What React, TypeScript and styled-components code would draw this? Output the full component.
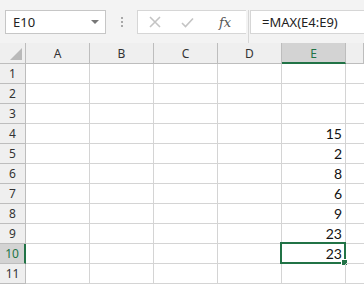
import React from "react";
import styled, { createGlobalStyle } from "styled-components";

const Global = createGlobalStyle`
  html, body { margin: 0; padding: 0; background: #ffffff; }
  body { width: 364px; height: 284px; overflow: hidden; }
`;

const GREEN = "#217346";
const GRID = "#d4d4d4";
const HEAD_LINE = "#bdbdbd";

const Page = styled.div`
  width: 364px;
  height: 284px;
  display: flex;
  flex-direction: column;
  font-family: "Segoe UI", "Noto Sans", "Open Sans", sans-serif;
`;

const Toolbar = styled.div`
  height: 43px;
  background: #f3f3f3;
  display: flex;
  align-items: flex-start;
  padding-top: 10px;
  box-sizing: border-box;
`;

const NameBox = styled.div`
  margin-left: 5px;
  width: 101px;
  height: 24px;
  box-sizing: border-box;
  background: #fff;
  border: 1px solid #c6c6c6;
  display: flex;
  align-items: center;
  justify-content: space-between;
  padding: 0 6px 0 7px;
  font-size: 13px;
  color: #222;
`;

const Caret = styled.span`
  width: 0;
  height: 0;
  border-left: 4px solid transparent;
  border-right: 4px solid transparent;
  border-top: 4px solid #777;
`;

const Dots = styled.div`
  width: 31px;
  height: 24px;
  display: flex;
  flex-direction: column;
  align-items: center;
  justify-content: center;
  gap: 2px;
  span {
    width: 2px;
    height: 2px;
    background: #a8a8a8;
  }
`;

const ActionBox = styled.div`
  width: 109px;
  height: 24px;
  box-sizing: border-box;
  background: #fff;
  border: 1px solid #d6d6d6;
  border-right: none;
  display: flex;
  align-items: center;
  padding-left: 11px;
  gap: 20px;
`;

const Fx = styled.span`
  font-family: "DejaVu Serif", "Liberation Serif", serif;
  font-style: italic;
  font-size: 13px;
  color: #555;
  margin-left: 5px;
`;

const Splitter = styled.div`
  width: 4px;
  height: 33px;
  margin-top: -10px;
  display: flex;
  justify-content: center;
  &::before {
    content: "";
    width: 1px;
    height: 100%;
    background: #d6d6d6;
    margin-top: 10px;
  }
`;

const FormulaBox = styled.div`
  flex: 1;
  height: 24px;
  box-sizing: border-box;
  background: #fff;
  border: 1px solid #d6d6d6;
  border-right: none;
  display: flex;
  align-items: center;
  padding-left: 11px;
  font-size: 13px;
  color: #222;
`;

const Sheet = styled.div`
  display: grid;
  grid-template-columns: 26px repeat(5, 64px) 18px;
  grid-template-rows: 21px repeat(11, 20px);
  font-family: "Lato", "Carlito", "Noto Sans", sans-serif;
`;

const Corner = styled.div`
  background: #efefef;
  border-right: 1px solid ${HEAD_LINE};
  border-bottom: 1px solid ${HEAD_LINE};
  box-sizing: border-box;
  display: flex;
  align-items: flex-end;
  justify-content: flex-end;
  padding: 0 3px 3px 0;
  &::after {
    content: "";
    width: 0;
    height: 0;
    border-left: 12px solid transparent;
    border-bottom: 12px solid #b9b9b9;
  }
`;

const ColHead = styled.div<{ $sel?: boolean }>`
  background: ${(p) => (p.$sel ? "#d3d3d3" : "#efefef")};
  border-right: 1px solid ${HEAD_LINE};
  border-bottom: ${(p) => (p.$sel ? `2px solid ${GREEN}` : `1px solid ${HEAD_LINE}`)};
  box-sizing: border-box;
  display: flex;
  align-items: center;
  justify-content: center;
  font-family: "Segoe UI", "Noto Sans", sans-serif;
  font-size: 12px;
  color: ${(p) => (p.$sel ? GREEN : "#333")};
  padding-top: ${(p) => (p.$sel ? "1px" : "0")};
`;

const RowHead = styled.div<{ $sel?: boolean }>`
  background: ${(p) => (p.$sel ? "#d3d3d3" : "#efefef")};
  border-right: ${(p) => (p.$sel ? `2px solid ${GREEN}` : `1px solid ${HEAD_LINE}`)};
  border-bottom: 1px solid ${HEAD_LINE};
  box-sizing: border-box;
  display: flex;
  align-items: center;
  justify-content: center;
  font-family: "Segoe UI", "Noto Sans", sans-serif;
  font-size: 12px;
  color: ${(p) => (p.$sel ? GREEN : "#333")};
`;

const Cell = styled.div<{ $last?: boolean }>`
  position: relative;
  border-right: ${(p) => (p.$last ? "none" : `1px solid ${GRID}`)};
  border-bottom: 1px solid ${GRID};
  box-sizing: border-box;
  display: flex;
  align-items: flex-end;
  justify-content: flex-end;
  padding: 0 3px 1px 0;
  font-size: 14px;
  color: #111;
`;

const Selection = styled.div`
  position: absolute;
  left: -2px;
  top: -2px;
  right: -1px;
  bottom: -1px;
  border: 2px solid ${GREEN};
  pointer-events: none;
`;

const Handle = styled.div`
  position: absolute;
  right: -4px;
  bottom: -4px;
  width: 5px;
  height: 5px;
  background: ${GREEN};
  border: 1px solid #fff;
`;

const cols = ["A", "B", "C", "D", "E"];
const values: Record<number, string> = { 4: "15", 5: "2", 6: "8", 7: "6", 8: "9", 9: "23", 10: "23" };

export default function App() {
  return (
    <>
      <Global />
      <Page>
        <Toolbar>
          <NameBox>
            <span>E10</span>
            <Caret />
          </NameBox>
          <Dots>
            <span />
            <span />
            <span />
          </Dots>
          <ActionBox>
            <svg width="12" height="12" viewBox="0 0 12 12">
              <path d="M1 1 L11 11 M11 1 L1 11" stroke="#c4c4c4" strokeWidth="1.6" fill="none" />
            </svg>
            <svg width="13" height="11" viewBox="0 0 13 11">
              <path d="M1 6 L4.5 9.5 L12 1.5" stroke="#c4c4c4" strokeWidth="1.6" fill="none" />
            </svg>
            <Fx>fx</Fx>
          </ActionBox>
          <Splitter />
          <FormulaBox>=MAX(E4:E9)</FormulaBox>
        </Toolbar>
        <Sheet>
          <Corner />
          {cols.map((c) => (
            <ColHead key={c} $sel={c === "E"}>
              {c}
            </ColHead>
          ))}
          <ColHead />
          {Array.from({ length: 11 }, (_, i) => i + 1).map((r) => (
            <React.Fragment key={r}>
              <RowHead $sel={r === 10}>{r}</RowHead>
              {cols.map((c) => (
                <Cell key={c}>
                  {c === "E" ? values[r] ?? "" : ""}
                  {c === "E" && r === 10 && (
                    <Selection>
                      <Handle />
                    </Selection>
                  )}
                </Cell>
              ))}
              <Cell $last />
            </React.Fragment>
          ))}
        </Sheet>
      </Page>
    </>
  );
}
